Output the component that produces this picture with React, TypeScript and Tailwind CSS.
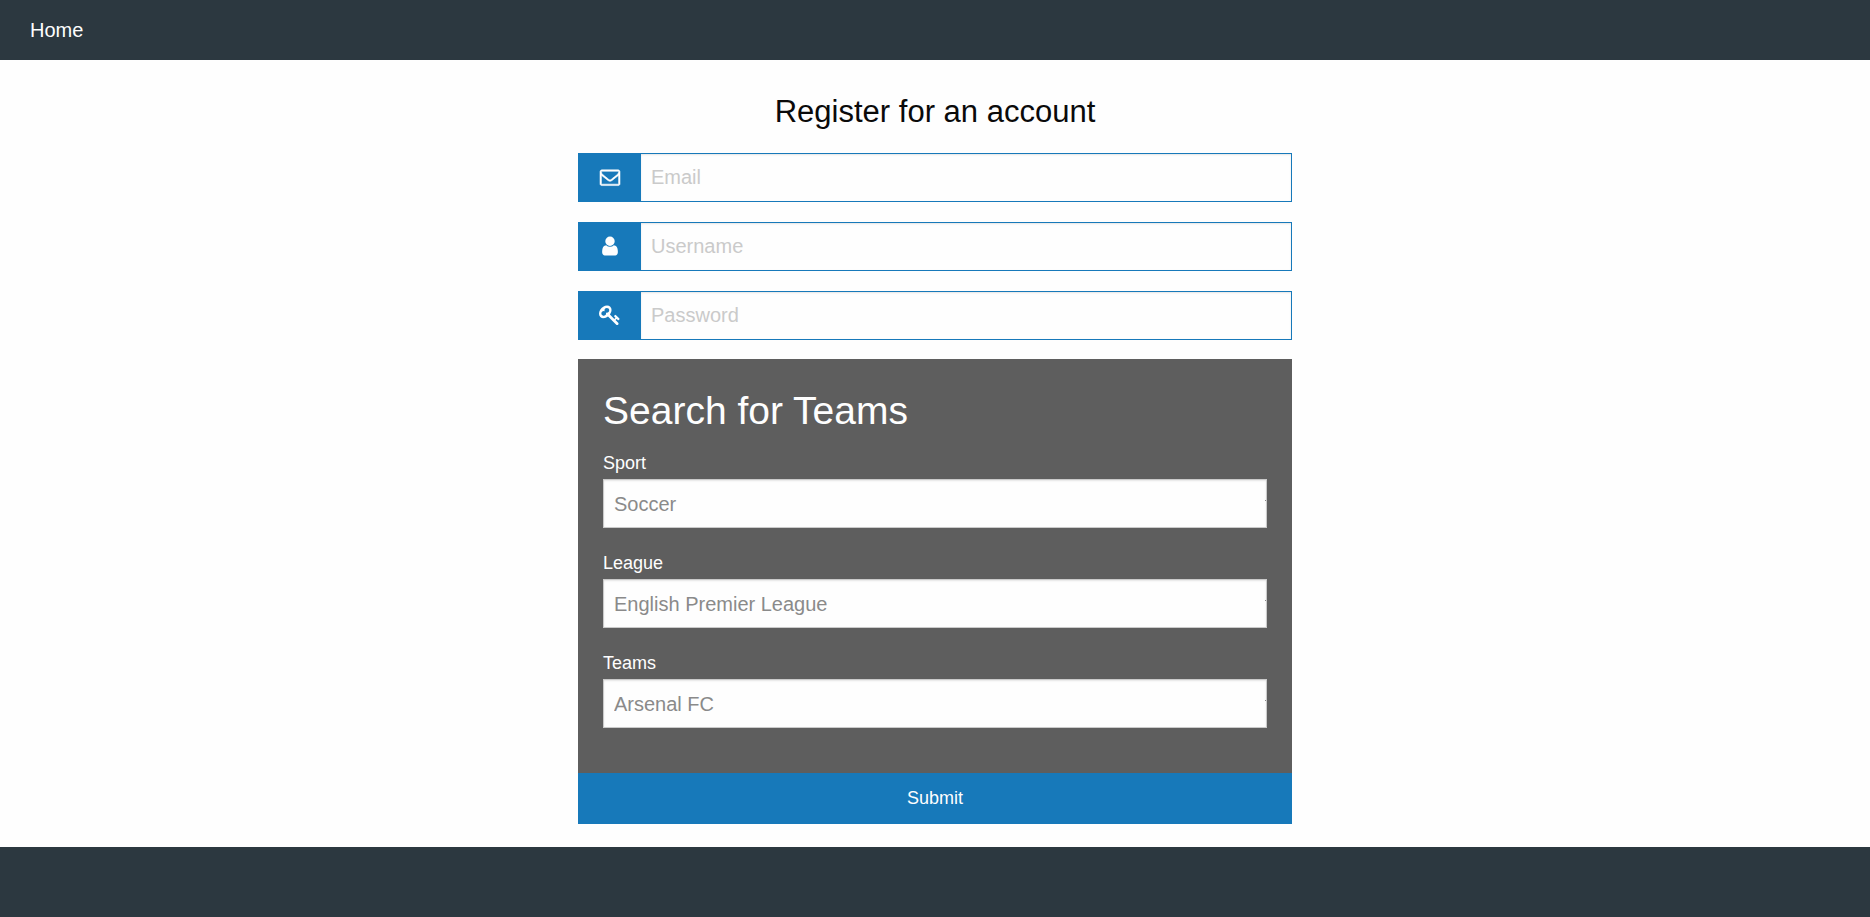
import { useState } from "react";
import type { ReactNode } from "react";

const envelope =
  "M1664 1504v-768q-32 36-69 66-268 206-426 338-51 43-83 67t-86.5 48.5-102.5 24.5h-2q-48 0-102.5-24.5t-86.5-48.5-83-67q-158-132-426-338-37-30-69-66v768q0 13 9.5 22.5t22.5 9.5h1472q13 0 22.5-9.5t9.5-22.5zm0-1051v-24.5l-.5-13-3-12.5-5.5-9-9-7.5-14-2.5h-1472q-13 0-22.5 9.5t-9.5 22.5q0 168 147 284 193 152 401 317 6 5 35 29.5t46 37.5 44.5 31.5 50.5 27.5 43 9h2q20 0 43-9t50.5-27.5 44.5-31.5 46-37.5 35-29.5q208-165 401-317 54-43 100.5-115.5t46.5-131.5zm128-37v1088q0 66-47 113t-113 47h-1472q-66 0-113-47t-47-113v-1088q0-66 47-113t113-47h1472q66 0 113 47t47 113z";
const user =
  "M1536 1399q0 109-62.5 187t-150.5 78h-854q-88 0-150.5-78t-62.5-187q0-85 8.5-160.5t31.5-152 58.5-131 94-89 134.5-34.5q131 128 313 128t313-128q76 0 134.5 34.5t94 89 58.5 131 31.5 152 8.5 160.5zm-256-887q0 159-112.5 271.5t-271.5 112.5-271.5-112.5-112.5-271.5 112.5-271.5 271.5-112.5 271.5 112.5 112.5 271.5z";
const key =
  "M832 512q0-80-56-136t-136-56-136 56-56 136q0 42 19 83-41-19-83-19-80 0-136 56t-56 136 56 136 136 56 136-56 56-136q0-42-19-83 41 19 83 19 80 0 136-56t56-136zm851 704q0 17-49 66t-66 49q-9 0-28.5-16t-36.5-33-38.5-40-24.5-26l-96 96 220 220q28 28 28 68 0 42-39 81t-81 39q-40 0-68-28l-671-671q-176 131-365 131-163 0-265.5-102.5t-102.5-265.5q0-160 95-313t248-248 313-95q163 0 265.5 102.5t102.5 265.5q0 189-131 365l355 355 96-96q-3-3-26-24.5t-40-38.5-33-36.5-16-28.5q0-17 49-66t66-49q13 0 23 10 6 6 46 44.5t82 79.5 86.5 86 73 78 28.5 41z";

function Icon({ path, className }: { path: string; className: string }) {
  return (
    <svg viewBox="0 0 1792 1792" className={className} aria-hidden="true">
      <path d={path} />
    </svg>
  );
}

function IconField({ id, type, label, icon }: { id: string; type: string; label: string; icon: ReactNode }) {
  return (
    <div className="flex h-[49px]">
      <label htmlFor={id} aria-label={label} className="flex w-[63px] shrink-0 items-center justify-center bg-[#1779ba] pb-0.5 text-[#fefefe]">
        {icon}
      </label>
      <input
        id={id}
        type={type}
        placeholder={label}
        className="min-w-0 flex-1 border border-l-0 border-[#1779ba] bg-[#fefefe] px-2.5 pb-0.5 text-xl text-[#0a0a0a] shadow-[inset_0_1px_2px_rgba(10,10,10,0.1)] outline-none placeholder:text-[#cacaca]"
      />
    </div>
  );
}

function SelectField({ id, label, options }: { id: string; label: string; options: string[] }) {
  const [value, setValue] = useState(options[0]);
  return (
    <div className="flex flex-col">
      <label htmlFor={id} className="text-lg leading-8">
        {label}
      </label>
      <select
        id={id}
        value={value}
        onChange={(e) => setValue(e.target.value)}
        className="h-[49px] w-full appearance-none rounded-none border border-[#cacaca] bg-[#fefefe] bg-[linear-gradient(#8a8a8a,#8a8a8a)] bg-[length:1px_1px] bg-[position:right_20px] bg-no-repeat px-2.5 text-xl text-[#8a8a8a] shadow-[inset_0_1px_2px_rgba(10,10,10,0.1)] outline-none"
      >
        {options.map((o) => (
          <option key={o}>{o}</option>
        ))}
      </select>
    </div>
  );
}

export default function App() {
  return (
    <div className="flex min-h-screen flex-col bg-[#fefefe] font-['Liberation_Sans',Arial,sans-serif] text-[#0a0a0a]">
      <nav className="flex h-[60px] items-center bg-[#2c3840] px-[30px]">
        <a href="#home" className="text-xl text-[#fefefe]">
          Home
        </a>
      </nav>

      <main className="mx-auto w-full max-w-[714px] pt-[30px] pb-[23px]">
        <form onSubmit={(e) => e.preventDefault()}>
          <h1 className="mb-[19px] text-center text-[31px] leading-[44px]">Register for an account</h1>
          <div className="mb-[19px] flex flex-col gap-5">
            <IconField
              id="email"
              type="email"
              label="Email"
              icon={<Icon path={envelope} className="size-5 overflow-visible fill-current stroke-current stroke-[50]" />}
            />
            <IconField id="username" type="text" label="Username" icon={<Icon path={user} className="size-[22px] fill-current" />} />
            <IconField id="password" type="password" label="Password" icon={<Icon path={key} className="size-[22px] fill-current" />} />
          </div>
          <section className="bg-[#5e5e5e] px-[25px] pt-[25px] pb-[45px] text-[#fefefe]">
            <h2 className="mb-2.5 text-[39px] leading-[53px]">Search for Teams</h2>
            <div className="flex flex-col gap-[19px]">
              <SelectField id="sport" label="Sport" options={["Soccer"]} />
              <SelectField id="league" label="League" options={["English Premier League"]} />
              <SelectField id="teams" label="Teams" options={["Arsenal FC"]} />
            </div>
          </section>
          <button type="submit" className="block h-[51px] w-full cursor-pointer bg-[#1779ba] pb-0.5 text-center text-lg text-[#fefefe]">
            Submit
          </button>
        </form>
      </main>

      <footer className="min-h-[70px] flex-1 bg-[#2c3840]" />
    </div>
  );
}
